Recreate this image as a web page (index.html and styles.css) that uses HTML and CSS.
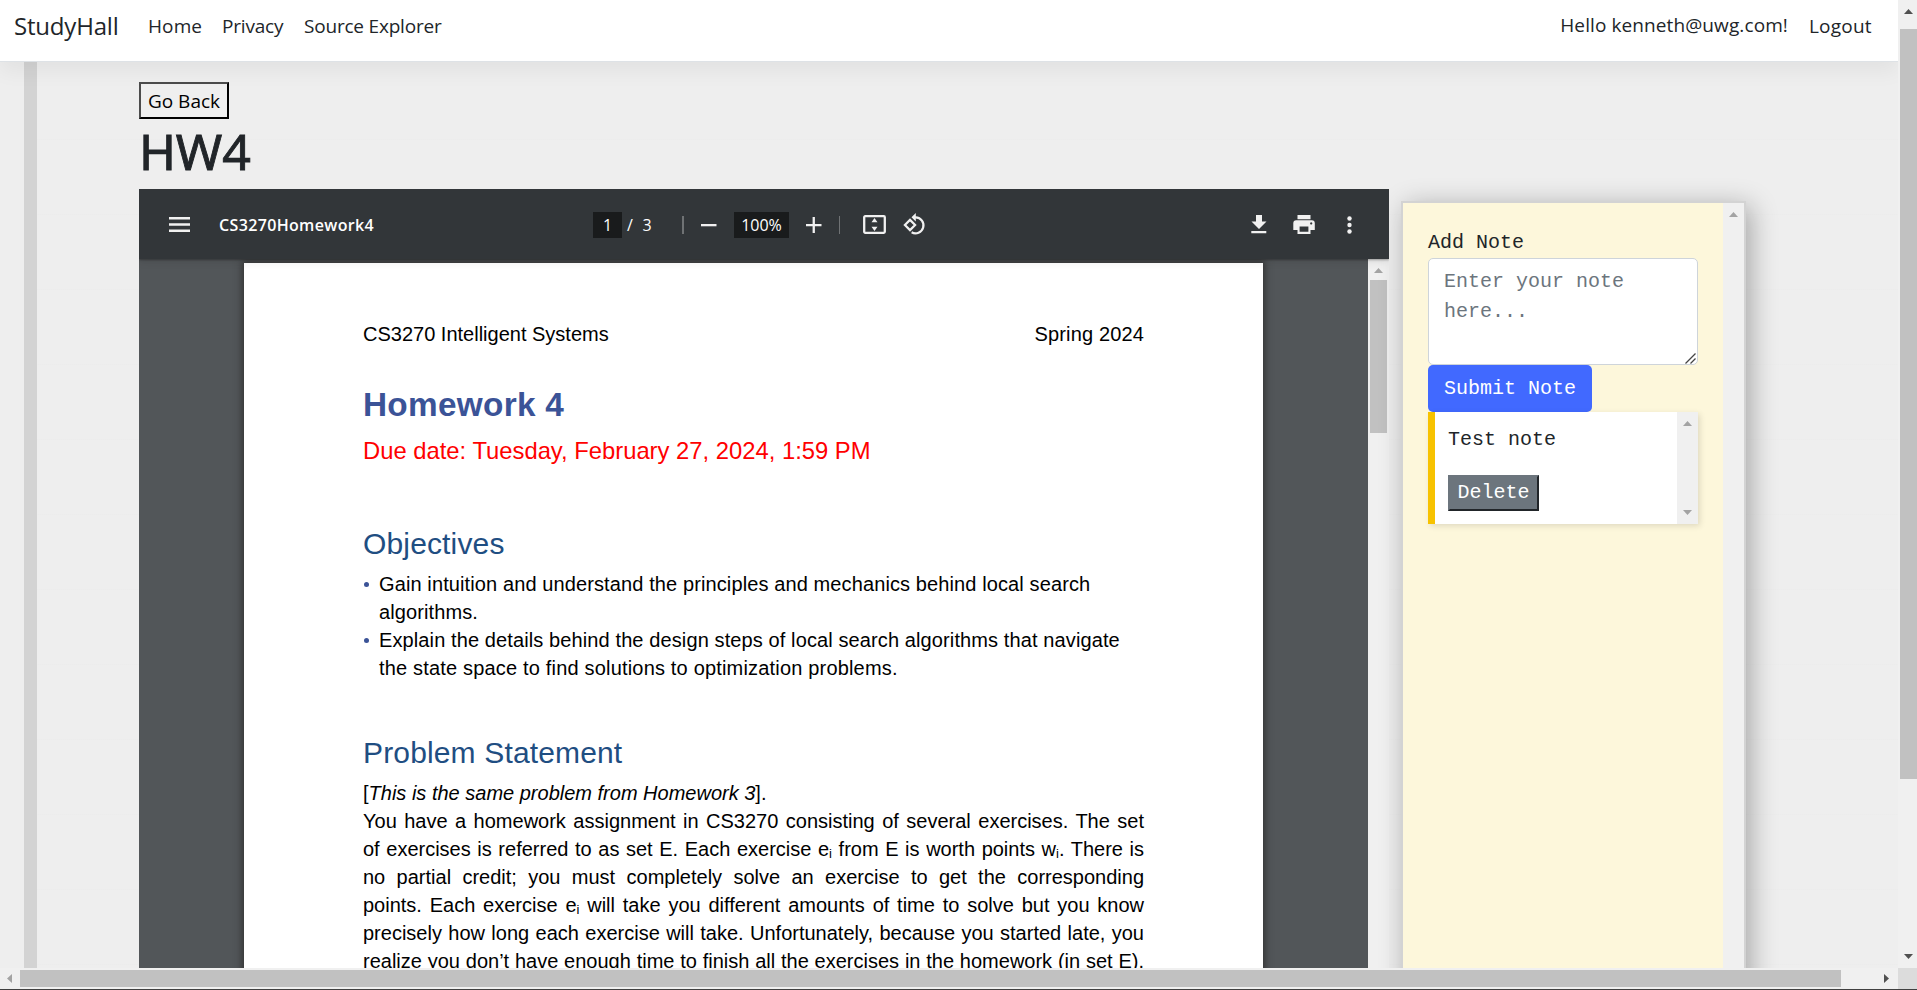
FILE: index.html
```html
<!DOCTYPE html>
<html lang="en">
<head>
<meta charset="utf-8">
<title>HW4 - StudyHall</title>
<link rel="stylesheet" href="styles.css">
</head>
<body>
<div class="window">
  <div class="viewport">
    <header class="navbar">
      <a class="brand">StudyHall</a>
      <a class="nav-link home">Home</a>
      <a class="nav-link privacy">Privacy</a>
      <a class="nav-link source">Source Explorer</a>
      <span class="hello">Hello kenneth@uwg.com!</span>
      <a class="nav-link logout">Logout</a>
    </header>
    <main class="body">
      <div class="rail"></div>
      <div class="content">
        <button class="back">Go Back</button>
        <h1>HW4</h1>
        <div class="columns">
          <section class="viewer">
            <div class="toolbar">
              <svg class="menu" width="21" height="15" viewBox="0 0 21 15"><path fill="#f1f1f1" d="M0 0h21v2.500H0zM0 6.200h21v2.500H0zM0 12.400h21v2.500H0z"/></svg>
              <span class="doc-name">CS3270Homework4</span>
              <span class="field page-no">1</span>
              <span class="page-total">/&nbsp; 3</span>
              <span class="sep"></span>
              <svg class="minus" width="16" height="16" viewBox="0 0 16 16"><path fill="#f1f1f1" d="M0 7h15.500v2.300H0z"/></svg>
              <span class="field zoom">100%</span>
              <svg class="plus" width="16" height="16" viewBox="0 0 16 16"><path fill="#f1f1f1" d="M0 7h6.600V0h2.300v7h6.600v2.300H8.900V16H6.600V9.300H0z"/></svg>
              <span class="sep thin"></span>
              <svg class="fit" width="23" height="19" viewBox="0 0 23 19"><rect x="1.200" y="1.200" width="20.600" height="16.600" rx="1" fill="none" stroke="#f1f1f1" stroke-width="2.300"/><path fill="#f1f1f1" d="M11.500 3l3 4.300h-6zM11.500 16l3-4.300h-6z"/></svg>
              <svg class="rotate" width="23" height="23" viewBox="0 0 23 23"><g fill="none" stroke="#f1f1f1" stroke-width="2.200"><path d="M7 6.900l5.100 5.100L7 17.100 1.900 12z"/><path d="M10.800 4.300h2a8 8 0 1 1-4.200 15"/></g><path fill="#f1f1f1" d="M12.800 0v8.600L8.500 4.300z"/></svg>
              <svg class="download" width="16" height="19" viewBox="0 0 16 19"><path fill="#f1f1f1" d="M5 0h6v6.500h4.500L8 14 .5 6.500H5zM.3 16h15v2.300H.3z"/></svg>
              <svg class="print" width="22" height="20" viewBox="0 0 22 20"><path fill="#f1f1f1" fill-rule="evenodd" d="M4.500 0h13v4.200h-13zM3.200 5.300h15.600a3 3 0 0 1 3 3v6.600h-4.300V19h-13v-4.100H.3V8.300a3 3 0 0 1 2.900-3zM6.600 11.500v5.300h8.800v-5.300zM18.200 7.300a1.100 1.100 0 1 0 .01 0z"/></svg>
              <svg class="more" width="5" height="18" viewBox="0 0 5 18"><g fill="#f1f1f1"><circle cx="2.500" cy="2.500" r="2.200"/><circle cx="2.500" cy="9" r="2.200"/><circle cx="2.500" cy="15.500" r="2.200"/></g></svg>
            </div>
            <div class="pages">
              <article class="page">
                <div class="page-head"><span>CS3270 Intelligent Systems</span><span class="term">Spring 2024</span></div>
                <h2 class="title">Homework 4</h2>
                <p class="due">Due date: Tuesday, February 27, 2024, 1:59 PM</p>
                <h3>Objectives</h3>
                <ul>
                  <li>Gain intuition and understand the principles and mechanics behind local search<br>algorithms.</li>
                  <li>Explain the details behind the design steps of local search algorithms that navigate<br><span class="loose">the state space to find solutions to optimization problems.</span></li>
                </ul>
                <h3 class="problem">Problem Statement</h3>
                <p class="lead">[<i>This is the same problem from Homework 3</i>].</p>
                <p class="line">You have a homework assignment in CS3270 consisting of several exercises. The set</p>
                <p class="line">of exercises is referred to as set E. Each exercise e<sub>i</sub> from E is worth points w<sub>i</sub>. There is</p>
                <p class="line">no partial credit; you must completely solve an exercise to get the corresponding</p>
                <p class="line">points. Each exercise e<sub>i</sub> will take you different amounts of time to solve but you know</p>
                <p class="line">precisely how long each exercise will take. Unfortunately, because you started late, you</p>
                <p class="line">realize you don’t have enough time to finish all the exercises in the homework (in set E).</p>
              </article>
              <div class="vbar"><i class="arrow up"></i><div class="thumb"></div></div>
            </div>
          </section>
          <aside class="notes">
            <div class="notes-body">
              <label>Add Note</label>
              <div class="entry">
                <textarea placeholder="Enter your note here..."></textarea>
                <svg class="grip" width="11" height="11" viewBox="0 0 11 11"><path fill="none" stroke="#444" stroke-width="1.300" d="M.5 10.500l10-10M5.500 10.500l5-5"/></svg>
              </div>
              <button class="submit">Submit Note</button>
              <div class="note">
                <div class="note-body"><p>Test note</p><button class="delete">Delete</button></div>
                <div class="vbar both"><i class="arrow up"></i><i class="arrow down"></i></div>
              </div>
            </div>
            <div class="vbar"><i class="arrow up"></i></div>
          </aside>
        </div>
      </div>
    </main>
  </div>
  <div class="vbar main-vbar both"><i class="arrow up dark"></i><div class="thumb"></div><i class="arrow down dark"></i></div>
  <div class="hbar"><i class="arrow left"></i><div class="thumb"></div><i class="arrow right dark"></i></div>
  <div class="corner"></div>
</div>
</body>
</html>
```

FILE: styles.css
```css
* { box-sizing: border-box; }
body {
  margin: 0;
  overflow: hidden;
  font-family: "Open Sans", "Noto Sans", sans-serif;
  font-size: 19px;
  color: #212529;
}
h1, h2, h3, p, ul { margin: 0; padding: 0; }

.window {
  display: grid;
  grid-template: 968px 21px / 1898px 19px;
  height: 990px;
  border-bottom: 1px solid #404040;
  background: #f0f0f0;
}
.viewport { overflow: hidden; display: flex; flex-direction: column; background: #eee; }

/* Navigation */
.navbar {
  position: relative;
  z-index: 2;
  flex: none;
  display: flex;
  align-items: flex-start;
  height: 62px;
  padding: 12px 25px 0 14px;
  background: #fff;
  border-bottom: 1px solid #dee2e6;
  box-shadow: 0 10px 20px rgba(0, 0, 0, .05);
  line-height: 28px;
  white-space: nowrap;
}
.brand { width: 134px; font-size: 24px; letter-spacing: -.2px; }
.home { width: 74px; }
.privacy { width: 82px; }
.nav-link { letter-spacing: -.2px; }
.home { letter-spacing: .1px; }
.hello { margin-left: auto; letter-spacing: .1px; line-height: 26px; }
.logout { width: 64px; margin-left: 21px; letter-spacing: .2px; }

/* Page body */
.body { flex: 1; display: flex; padding-left: 24px; min-height: 0; }
.rail { flex: none; width: 13px; background: #d3d3d3; }
.content {
  flex: 1;
  min-width: 0;
  padding: 20px 0 0 102px;
  background: repeating-linear-gradient(#eee 0, #eee 36.500px, #ebebeb 37.500px) 0 3px;
}
.back {
  display: block;
  width: 90px;
  height: 37px;
  padding: 0;
  border: 2px outset #000;
  border-color: #4c4c4c #000 #000 #4c4c4c;
  background: #efefef;
  font: 19px "Open Sans", sans-serif;
  letter-spacing: 0;
  color: #000;
}
h1 {
  height: 70px;
  padding-top: 2px;
  font: 400 50px/60px "Noto Sans", sans-serif;
  letter-spacing: -.2px;
  -webkit-text-stroke: .9px #212529;
}
.columns { display: flex; align-items: flex-start; }

/* Document viewer */
.viewer { width: 1250px; height: 779px; overflow: hidden; background: #525659; }
.toolbar {
  position: relative;
  z-index: 1;
  display: flex;
  align-items: center;
  height: 70px;
  padding: 1px 37px 0 30px;
  background: #323639;
  box-shadow: 0 -2px 8px rgba(0, 0, 0, .09), 0 4px 8px rgba(0, 0, 0, .06), 0 1px 2px rgba(0, 0, 0, .3);
  color: #fff;
  font-size: 16px;
  white-space: nowrap;
}
.toolbar svg { flex: none; }
.doc-name { width: 188px; margin: 0 186px 0 29px; font-size: 16px; font-weight: 600; letter-spacing: .35px; }
.field { flex: none; height: 26px; background: #191b1c; line-height: 26px; text-align: center; letter-spacing: 0; }
.page-no { width: 29px; }
.page-total { width: 54px; padding-left: 5px; letter-spacing: .4px; }
.sep { width: 2px; height: 18px; margin: 0 17px 0 6px; background: #6f7274; }
.sep.thin { width: 1px; margin: 0 23px 0 17px; }
.zoom { width: 55px; margin: 0 17px; }
.rotate { margin-left: 17px; }
.download { margin-left: auto; }
.print { margin-left: 26px; }
.more { margin-left: 32px; }

.pages { display: flex; height: 709px; padding-left: 105px; }
.page {
  width: 1019px;
  height: 760px;
  margin: 4px 105px 0 0;
  padding: 57px 119px 0;
  background: #fff;
  box-shadow: 0 0 7px 2px #333;
  font: 20px/28px "Liberation Sans", Arial, sans-serif;
  color: #000;
  white-space: nowrap;
}
.page-head { display: flex; justify-content: space-between; }
.term { letter-spacing: .15px; }
.title { margin-top: 37px; font-size: 33.330px; line-height: 40px; letter-spacing: .3px; color: #3b5397; }
.due { margin-top: 10px; font-size: 23.800px; line-height: 32px; color: #f00; }
h3 { margin: 59px 0 8px; font-size: 30px; font-weight: 400; line-height: 36px; letter-spacing: .15px; color: #1f4e82; }
h3.problem { margin-top: 53px; }
ul { list-style: none; }
li { position: relative; padding-left: 16px; letter-spacing: .11px; }
.loose { letter-spacing: .18px; }
li::before {
  content: "";
  position: absolute;
  left: 1px;
  top: 12px;
  width: 5px;
  height: 5px;
  border-radius: 50%;
  background: #3b5397;
}
.line { text-align: justify; text-align-last: justify; white-space: normal; height: 28px; }
sub { font-size: 13px; line-height: 0; vertical-align: -2px; }

/* Notes */
.notes {
  display: flex;
  width: 345px;
  height: 800px;
  margin: 12px 0 0 12px;
  border: 2px solid #d3d3d3;
  background: #fdf7db;
  box-shadow: 5px 5px 25px rgba(0, 0, 0, .3);
  font: 20px/30px "Liberation Mono", "Courier New", monospace;
}
.notes-body { width: 320px; padding: 25px; }
.notes label { display: block; }
.entry { position: relative; }
.notes textarea {
  display: block;
  width: 270px;
  height: 107px;
  padding: 8px 15px 6px;
  border: 1px solid #ced4da;
  border-radius: 5px;
  font: inherit;
  background: #fff;
  resize: none;
}
.notes textarea::placeholder { color: #6c757d; }
.grip { position: absolute; right: 2px; bottom: 1px; }
.submit { display: block; width: 164px; height: 47px; padding: 0; border: 0; border-radius: 5px; background: #4169ff; color: #fff; font: inherit; }
.note { display: flex; width: 270px; height: 112px; border-left: 7px solid #f7c200; background: #fff; box-shadow: 2px 2px 6px rgba(0, 0, 0, .12); }
.note-body { flex: 1; padding: 13px 13px 0; }
.note p { height: 50px; }
.delete { display: block; width: 91px; height: 36px; padding: 0; border: 2px solid; border-color: #6c757d #212529 #212529 #6c757d; background: #6c757d; color: #fff; font: inherit; line-height: 30px; }

/* Scrollbars */
.vbar { flex: none; display: flex; flex-direction: column; align-items: center; width: 21px; padding: 9px 0; background: #f0f0f0; }
.vbar.both { justify-content: space-between; }
.pages .vbar .thumb { width: 17px; height: 153px; margin-top: 7px; background: #c1c1c1; }
.main-vbar { width: 19px; align-items: flex-end; justify-content: flex-start !important; }
.main-vbar .thumb { width: 17px; height: 750px; margin-top: 15px; background: #c1c1c1; }
.main-vbar .arrow { margin-right: 4px; }
.main-vbar .down { margin-top: auto; }
.arrow { flex: none; width: 9px; height: 5px; background: #a3a3a3; }
.arrow.dark { background: #505050; }
.up { clip-path: polygon(50% 0, 100% 100%, 0 100%); }
.down { clip-path: polygon(0 0, 100% 0, 50% 100%); }
.left { width: 5px; height: 9px; clip-path: polygon(100% 0, 100% 100%, 0 50%); }
.right { width: 5px; height: 9px; clip-path: polygon(0 0, 100% 50%, 0 100%); }
.hbar { display: flex; align-items: center; padding: 0 9px 0 7px; }
.hbar .thumb { width: 1821px; height: 17px; margin: 0 auto 0 8px; background: #c1c1c1; }
.corner { background: #dcdcdc; }
```
